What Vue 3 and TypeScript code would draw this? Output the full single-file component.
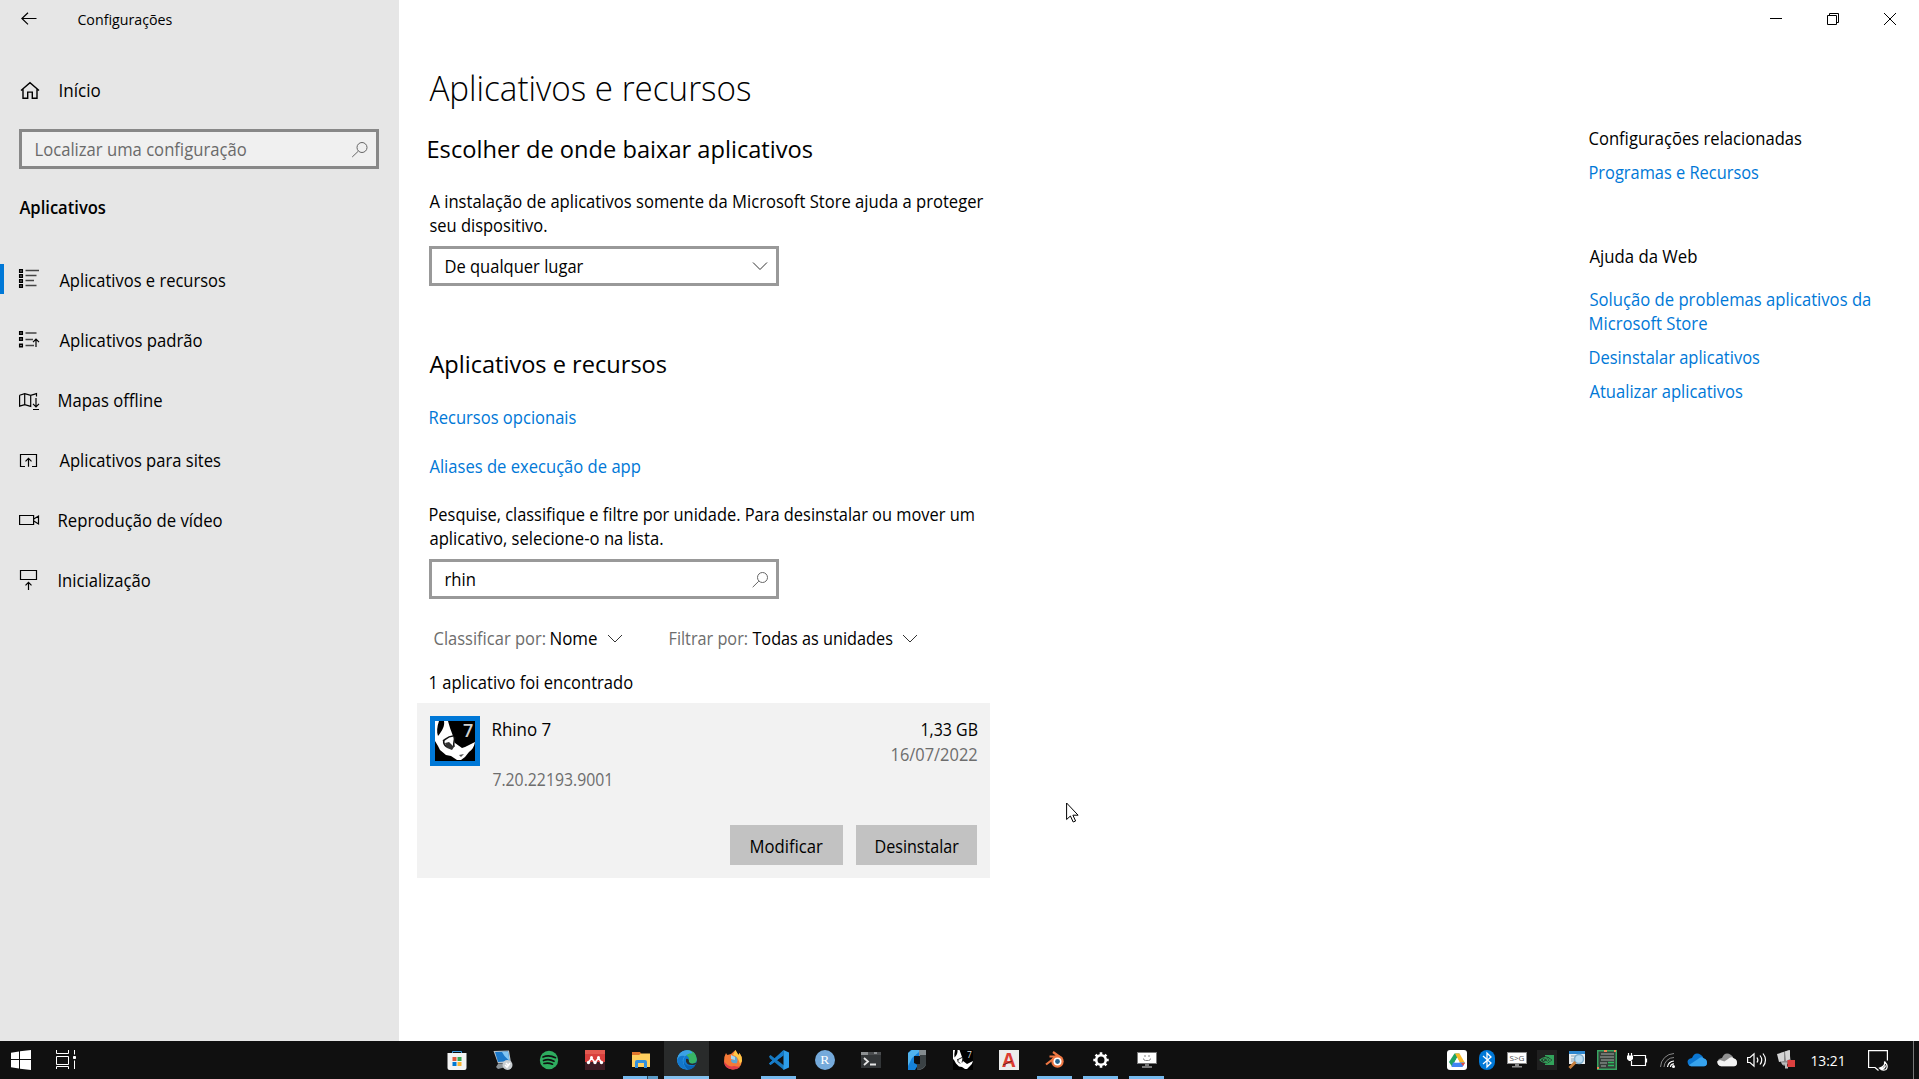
<script setup lang="ts">
interface NavItem { label: string; width: number; icon: string; inset: number }
interface Link { lines: { text: string; width: number }[] }

const nav: NavItem[] = [
  { label: 'Aplicativos e recursos', width: 166, icon: 'list', inset: 0 },
  { label: 'Aplicativos padrão', width: 142.5, icon: 'defaults', inset: 0 },
  { label: 'Mapas offline', width: 104, icon: 'map', inset: -0.5 },
  { label: 'Aplicativos para sites', width: 161, icon: 'sites', inset: 0 },
  { label: 'Reprodução de vídeo', width: 163.5, icon: 'video', inset: -0.8 },
  { label: 'Inicialização', width: 91.5, icon: 'startup', inset: -0.8 },
]

const helpLinks: Link[] = [
  { lines: [{ text: 'Solução de problemas aplicativos da', width: 281 }, { text: 'Microsoft Store', width: 118 }] },
  { lines: [{ text: 'Desinstalar aplicativos', width: 170 }] },
  { lines: [{ text: 'Atualizar aplicativos', width: 153 }] },
]

// Fits a line of text so that its ink spans exactly the given width.
const canvas = document.createElement('canvas').getContext('2d')!
const vFit = {
  mounted(el: HTMLElement, { value }: { value: number }) {
    const cs = getComputedStyle(el)
    canvas.font = `${cs.fontWeight} ${cs.fontSize} ${cs.fontFamily}`
    const m = canvas.measureText((el.textContent || '').trim())
    const scale = value / (m.actualBoundingBoxLeft + m.actualBoundingBoxRight)
    el.style.width = `${value}px`
    el.style.transform = `translateX(${m.actualBoundingBoxLeft * scale + 0.4}px) scaleX(${scale})`
  },
}
</script>

<template>
  <div class="screen">
    <div class="window">
      <aside class="sidebar">
        <header class="titlebar">
          <svg class="back" width="16" height="14" viewBox="0 0 16 14"><path d="M7 .8 .9 6.5 7 12.400M1 6.500H15.500" /></svg>
          <span class="t title" v-fit="95">Configurações</span>
        </header>
        <div class="home">
          <svg width="20" height="24" viewBox="0 0 20 24"><path d="M1 12.500 10 4.600l9 7.900M3 11v9.300h4.700v-6.200h4.600v6.200H17V11" /></svg>
          <span class="t" v-fit="40.5">Início</span>
        </div>
        <div class="search">
          <span class="t" v-fit="210.500">Localizar uma configuração</span>
          <svg width="18" height="18" viewBox="0 0 18 18"><circle cx="11" cy="6.500" r="5" /><path d="M7.300 10.200 1.200 16" /></svg>
        </div>
        <h3 class="t" v-fit="86">Aplicativos</h3>
        <nav>
          <div v-for="(item, i) in nav" :key="item.label" class="nav-item" :class="{ active: i === 0 }">
            <svg width="22" height="24" viewBox="0 0 22 24">
              <template v-if="item.icon === 'list'">
                <path class="thick" d="M.7 1.700h2.600v2.600H.7zM.7 6.700h2.600v2.600H.7zM.7 11.700h2.600v2.600H.7zM.7 16.700h2.600v2.600H.7z" />
                <path class="soft" d="M6.500 2.500H20M6.500 7.500h11M6.500 12.500H15M6.500 17.500h11" />
              </template>
              <template v-else-if="item.icon === 'defaults'">
                <path class="thick" d="M.7 3.700h2.600v2.600H.7zM.7 9.700h2.600v2.600H.7zM.7 16.200h2.600v2.600H.7z" />
                <path class="soft" d="M6.500 5h11M6.500 11.500h7.500M6.500 17.500H15" />
                <path d="M17 19v-7.500M14 14.200l3-3 3 3" />
              </template>
              <path v-else-if="item.icon === 'map'" d="M.6 7.200 5.700 5.600l6 1.800 5.800-1.800v3M.6 7.200v11l5.100-1.500 6 1.700V7.400M5.700 5.600v11.100M17 10v8.500M14 15.800l3 3 3-3M14 21.500h6" />
              <path v-else-if="item.icon === 'sites'" d="M6 18.500H1.500v-12h16v12H13M9.500 18.800v-8M6.500 13.300l3-3 3 3" />
              <path v-else-if="item.icon === 'video'" d="M.6 7.500h14v9H.6zM14.800 11l4.700-3v8l-4.700-3" />
              <path v-else d="M1.500 2.500h16v9h-16zM9.500 22v-7.500M6.500 17.300l3-3 3 3" />
            </svg>
            <span class="t" :style="{ marginLeft: item.inset + 'px' }" v-fit="item.width">{{ item.label }}</span>
          </div>
        </nav>
      </aside>

      <main>
        <section class="content">
          <h1 class="t" v-fit="321">Aplicativos e recursos</h1>
          <h2 class="t first" v-fit="384">Escolher de onde baixar aplicativos</h2>
          <p class="intro">
            <span class="t" v-fit="554.5">A instalação de aplicativos somente da Microsoft Store ajuda a proteger</span>
            <span class="t" v-fit="117.5">seu dispositivo.</span>
          </p>
          <div class="field">
            <span class="t" v-fit="138.500">De qualquer lugar</span>
            <svg width="18" height="18" viewBox="0 0 18 18"><path d="M2 5.500 9 12.500l7-7" /></svg>
          </div>
          <h2 class="t second" v-fit="237">Aplicativos e recursos</h2>
          <a class="t" v-fit="146.500">Recursos opcionais</a>
          <a class="t" v-fit="211.500">Aliases de execução de app</a>
          <p class="hint">
            <span class="t" v-fit="545">Pesquise, classifique e filtre por unidade. Para desinstalar ou mover um</span>
            <span class="t" v-fit="233.500">aplicativo, selecione-o na lista.</span>
          </p>
          <div class="field query">
            <span class="t rhin" v-fit="29.500">rhin</span>
            <svg width="18" height="18" viewBox="0 0 18 18"><circle cx="11.500" cy="6.500" r="5" /><path d="M7.800 10.200 1.700 16.200" /></svg>
          </div>
          <div class="filters">
            <span class="t muted" v-fit="111">Classificar por:</span>
            <span class="t value" v-fit="47">Nome</span>
            <svg width="16" height="10" viewBox="0 0 16 10"><path d="M1 1l7 7 7-7" /></svg>
            <span class="t muted drive" v-fit="78">Filtrar por:</span>
            <span class="t value" v-fit="140">Todas as unidades</span>
            <svg width="16" height="10" viewBox="0 0 16 10"><path d="M1 1l7 7 7-7" /></svg>
          </div>
          <div class="t found" v-fit="203">1 aplicativo foi encontrado</div>
          <article class="card">
            <div class="card-info">
              <svg class="app-icon" width="50" height="50" viewBox="0 0 50 50">
                <path fill="#0078d7" d="M0 0h50v50H0z" /><path fill="#000" d="M5 5h40v40H5z" />
                <path fill="#fff" d="M5 5h4C7 11 6.500 16 8 20c4-5 7-10 6-15h4c1 4 3 10 5 15l2 7 7 5 3-1 10-5c-1 5-3 8-6 10l-4 5-4 3h-4l-6-4-5-1-6-5-2-4-3-5z" />
                <path fill="none" stroke="#111" stroke-width="1.600" d="M13 25c3-2 5-5 10-5M14 24c-1 3 0 5 3 7M25 21c-1 5-2 7-1 10" />
                <path fill="#333" d="m15 27 4-1 5 5-2 3-5-2z" /><path fill="#555" d="m29 39 5-1-3 3z" />
                <text x="33" y="20.500" font-size="18" font-weight="600" fill="#d0d0d0">7</text>
              </svg>
              <div class="names">
                <span class="t" v-fit="58.500">Rhino 7</span>
                <span class="t muted" v-fit="118">7.20.22193.9001</span>
              </div>
              <div class="facts">
                <span class="t" v-fit="56">1,33 GB</span>
                <span class="t muted" v-fit="86">16/07/2022</span>
              </div>
            </div>
            <div class="actions">
              <button class="modify"><span class="t" v-fit="73">Modificar</span></button>
              <button class="remove"><span class="t" v-fit="84">Desinstalar</span></button>
            </div>
          </article>
        </section>

        <section class="side">
          <svg class="controls" width="130" height="14" viewBox="0 0 130 14">
            <path d="M0 6.500h12M57.500 3.500h9v9h-9zM59.500 3.500v-2h9v9h-2M114 1l12 12M126 1l-12 12" />
          </svg>
          <div class="t related" v-fit="212">Configurações relacionadas</div>
          <a class="t programs" v-fit="169">Programas e Recursos</a>
          <div class="t web" v-fit="108">Ajuda da Web</div>
          <div class="help">
            <a v-for="link in helpLinks" :key="link.lines[0].text">
              <span v-for="line in link.lines" :key="line.text" class="t" v-fit="line.width">{{ line.text }}</span>
            </a>
          </div>
        </section>
      </main>
    </div>

    <footer class="taskbar">
      <svg class="start" width="70" height="38" viewBox="0 0 70 38">
        <path fill="#fff" d="M0 11.700 8 10.500V18H0zM9 10.300 20 9v9H9zM0 19h8v8.500l-8-1.200zM9 19h11v10L9 27.700z" />
        <g fill="none" stroke="#fff"><path d="M45.500 9v3.500h12V9M45.500 15.500h12v8h-12zM45.500 28v-2.500h12V28M63.500 9v4.500M63.500 19.500V28" /><path fill="#fff" d="M62.500 15.500h2v2h-2z" /></g>
      </svg>

      <div class="apps">
        <div class="app"><svg viewBox="0 0 20 20"><path d="M5.500 4V1.500h9V4" fill="none" stroke="#3a9be0" /><path fill="#f4f4f4" d="M.5 3h19v15q0 2-2 2h-15q-2 0-2-2z" /><path fill="#e05a3c" d="M5.500 7H9.500v4h-4z" /><path fill="#36a852" d="M10.500 7h4v4h-4z" /><path fill="#0078d4" d="M5.500 12h4v4h-4z" /><path fill="#fab432" d="M10.500 12h4v4h-4z" /></svg></div>
        <div class="app"><svg viewBox="0 0 20 20"><path fill="#b9c3ca" d="M.5 1 16 .5l2 12-13 1z" /><path fill="#1b78c9" d="m2 2 13-.5 1.500 9.500L5 12z" /><path fill="#80c5f3" d="m9 2 6-.3L16.500 11l-5-5z" /><path fill="#8b9297" d="m5 14 7-1 1 4-8 2-2-2z" /><circle cx="14.500" cy="15" r="5" fill="#c9ced1" /><path d="m12 15 2 2 3-4M13 13l3 3" stroke="#fff" stroke-width="1.500" fill="none" /></svg></div>
        <div class="app"><svg viewBox="0 0 20 20"><circle cx="10" cy="10" r="9.200" fill="#2ead5f" /><path d="M4 7q6-2.500 12.500.7M4.500 10.500q5.500-2 10.500.8M5 13.500q4.500-1.200 8.500.7" fill="none" stroke="#101010" stroke-width="1.700" stroke-linecap="round" /></svg></div>
        <div class="app"><svg viewBox="0 0 20 20"><path fill="#d8403d" d="M0 0h20v12H0z" /><path fill="#3d1c23" d="M0 12h20v8H0z" /><path fill="#e45a50" d="M0 0h20v4H0z" /><path d="M3.500 12.500 6.500 8l3.500 4.500L13.500 8l3 4.500" fill="none" stroke="#fff" stroke-width="1.500" /><circle cx="3.500" cy="12.500" r="1.700" fill="#fff" /><circle cx="10" cy="12.500" r="1.700" fill="#fff" /><circle cx="16.500" cy="12.500" r="1.700" fill="#fff" /><circle cx="6.500" cy="7.500" r="1.500" fill="#fff" /><circle cx="13.500" cy="7.500" r="1.500" fill="#fff" /></svg></div>
        <div class="app open grouped"><svg viewBox="0 0 20 20"><path fill="#e2762c" d="M1 2h8l2 3v4H1z" /><path fill="#ffcf5e" d="M1 5h7l2-1.500h9V17H1z" /><path fill="#3290dc" d="M4 18v-6q0-2 2-2h8q2 0 2 2v6h-3v-5H7v5z" /></svg></div>
        <div class="app open current"><svg viewBox="0 0 20 20"><circle cx="10" cy="10" r="9.800" fill="#0f78d0" /><path fill="#3aa5e8" d="M.3 9A9.800 9.800 0 0 1 18 4.500C13 0 6 3 4 8z" /><path fill="#38b565" d="M10 .3q9 0 9.900 9-.5 4.400-5 4.500-4 0-3-3Q13 5 6 5z" /><path fill="#3ba2e4" d="M.4 8Q3 .3 10 .2q4.500 0 5.600 3Q9 3 6.500 9 6 15 11 19.600 1 19-.1 10z" /><path fill="#1377cc" d="M0 10Q2 4.500 8 6q-3 3-2 6 1 5 5 7.700Q1 19 0 10z" /><path fill="#0a62b4" d="M6.500 9q0 7 7 7 3 0 5-1.500Q16 19.500 11 19.700 6 16 6.500 9z" /><path fill="#292b2b" d="M9 9q3-1 3 3 2 3 7.500.5L18.500 14.500q-8 2-9.500-3z" /></svg></div>
        <div class="app"><svg viewBox="0 0 20 20"><path fill="#f57937" d="M3 3l1.500 2.500Q6 4 8 4L12.500 0q1 3.500 3 5l1-2q3 4 2.500 8-1 8-9 8.500Q2 19 1 12 .5 7 3 3z" /><path fill="#ffc846" d="m12.500 0 3 5 1-2q3 4 2.500 8l-2 3Q15 6 10 5z" /><path fill="#df3e4a" d="M1 11q4 7 10 5l6 1q-3 3-8 2.500Q1 18.500 1 11z" /><circle cx="10" cy="10.500" r="4.500" fill="#5ba6d4" /><path fill="#f57937" d="M2 6q4-3 7 1l3 1q-1 2-4 2 0 4 6 3-4 5-9 1z" /><path fill="#a9d8ee" d="m8 5 4 2v3l-4-1z" /></svg></div>
        <div class="app open"><svg viewBox="0 0 20 20"><path fill="#1778bd" d="M0 6.500 1.500 5 15 15.500V20L1 8.500zM14.500 0v5L1.500 15 0 13.500z" /><path fill="#2d9de9" d="m14.500 0 5.500 2.500v15L14.500 20z" /><path fill="#167dcc" d="m0 13.500 14.500-13v5L1.500 15z" /></svg></div>
        <div class="app"><svg viewBox="0 0 20 20"><circle cx="10" cy="10" r="10" fill="#75aadb" /><text x="5.300" y="14.200" class="serif" font-size="13.500" fill="#fff">R</text></svg></div>
        <div class="app"><svg viewBox="0 0 20 20"><path fill="#4b4d4f" d="M0 2h20v16H0z" /><path fill="#333638" d="M0 5h20v13H0z" /><path fill="#8d9092" d="M0 2h7v3H0zM13 2h3v2h-3z" /><path d="m3 8 4 3.500-4 3.500M9 14.500h6" fill="none" stroke="#e5e5e5" stroke-width="1.800" /></svg></div>
        <div class="app"><svg viewBox="0 0 20 20"><path fill="#1582da" d="M4 0h8v6H7v7l4 2-3 5H1V3z" /><path fill="#52b4ed" d="m1 3 4-3h7v2L5 8l-4 8z" /><path fill="#848c90" d="M12 0h7v12q0 8-9 8v-6h3V6h-1z" /><path fill="#3a4144" d="M13 5h6v9q-1 5-9 6v-6h3z" /></svg></div>
        <div class="app"><svg viewBox="0 0 20 20"><path fill="#000" d="M0 0h20v20H0z" /><path fill="#fff" d="M0 0h2Q1 4 1.500 7.500 5 4 4.500 0h2L9 7l1 4 4 3 6-3q-1 4-3 5l-3 3h-2l-3-2-3-.5-3-3L1 10l-1-1z" /><path fill="none" stroke="#222" d="m4 10 5-2.500M5 9.500q-1 2 2 4M10 8.500l-1 4" /><text x="14" y="8" font-size="8.500" fill="#ddd">7</text></svg></div>
        <div class="app"><svg viewBox="0 0 20 20"><path fill="#ececec" d="M0 0h20v20H0z" /><text x="3.300" y="16.700" font-size="19" font-weight="700" fill="#dc3c32">A</text><path d="m4 15 9-4" stroke="#68201f" /></svg></div>
        <div class="app open"><svg viewBox="0 0 20 20"><path d="M1 14.500 11.500 6.500H4.500M8 2l9 6.500" fill="none" stroke="#ef7743" stroke-width="2.200" /><circle cx="12.500" cy="11.500" r="6.200" fill="#ef7743" /><circle cx="12.500" cy="11.500" r="4" fill="#fff" /><circle cx="12.500" cy="11.500" r="2.400" fill="#28638c" /></svg></div>
        <div class="app open"><svg viewBox="0 0 20 20"><circle cx="10" cy="10" r="4.800" fill="none" stroke="#fff" stroke-width="2.600" /><path d="M10 2.300v3M10 14.700v3M2.300 10h3M14.700 10h3M4.600 4.600l2 2M13.400 13.400l2 2M15.400 4.600l-2 2M6.600 13.400l-2 2" stroke="#fff" stroke-width="2.600" /></svg></div>
        <div class="app open"><svg viewBox="0 0 20 20"><path fill="#777" d="M0 2h20v12H0zM8 14h4v2h3v2H5v-2h3z" /><path fill="#fff" d="M1 3h18v10H1z" /><path fill="none" stroke="#888" d="M8 5v2M12 5v2M6.500 8.500q0 2 2 2h3q2 0 2-2" /></svg></div>
      </div>

      <div class="tray">
        <svg viewBox="0 0 20 20"><rect width="20" height="20" rx="3" fill="#fff" /><path fill="#1fa463" d="M7.500 3.500h5L5 16.500 2 12z" /><path fill="#f9b928" d="M8 3.500h4.500L18 13h-5z" /><path fill="#4285f4" d="M6 12.500h12L15.500 17h-11z" /><path fill="#fff" d="m10 8 2.500 4.500h-5z" /><path fill="#e5483b" d="M14 13h4l-2 3z" /></svg>
        <svg viewBox="0 0 20 20"><rect x="2" width="16" height="20" rx="8" fill="#0078d7" /><path d="m6 6 8 7-4 4V3l4 4-8 7" fill="none" stroke="#fff" stroke-width="1.300" /></svg>
        <svg viewBox="0 0 20 20"><path fill="#8b8b8b" d="M0 2h20v12H0zM8 14h4v2h3v1.500H5V16h3z" /><path fill="#fff" d="M1 3h18v10H1z" /><text x="2.500" y="11" font-size="8" textLength="15" lengthAdjust="spacingAndGlyphs" fill="#555">S&gt;G</text></svg>
        <svg viewBox="0 0 20 20"><path fill="#202020" d="M0 0h20v20H0z" /><path fill="#32a35b" d="M8 5h9v10H8z" /><path d="M3 10q5-5 10.500 0-5.500 5.500-10.500 0zM6 10q2.500-2.500 5 0-2.500 3-5 0z" fill="none" stroke="#202020" stroke-width="2.200" /><path d="M3 10q5-5 10.500 0-5.500 5.500-10.500 0zM6 10q2.500-2.500 5 0-2.500 3-5 0z" fill="none" stroke="#35a35c" stroke-width="1.100" /></svg>
        <svg viewBox="0 0 20 20"><path fill="#e8ecef" d="M2 1h16v13H2z" /><path fill="#2c86cf" d="M2 1h16v3H2z" /><path d="M4 6h9M4 9h5M4 11h4" stroke="#8ba5b5" /><circle cx="12" cy="9" r="4.500" fill="#b9dcf2" stroke="#7eaecd" stroke-width="1.500" /><path d="m8.500 12-6 6" stroke="#c67f3e" stroke-width="3" /></svg>
        <svg viewBox="0 0 20 20"><path fill="#353e39" stroke="#38a461" stroke-width="1.500" d="M.75.75h18.500v18.500H.75z" /><path d="M4 4h13M3 7h14M4 10h13M3 13h7M4 16h5" stroke="#a4aaa5" stroke-width="1.200" /><path d="M11 12.500h6M11 15.500h6" stroke="#2dbb60" stroke-width="1.600" /><path d="M7 1h3M17 1h2M0 18h2" stroke="#ee8555" stroke-width="2" /></svg>
        <svg viewBox="0 0 20 20"><path fill="none" stroke="#fff" stroke-width="1.200" d="M6.500 5.500h12v10h-14V11M19.500 8.500v4M1.500 3v3M4.500 3v3" /><path fill="#fff" d="M0 5.500h6V9L4 11H2L0 9z" /></svg>
        <svg viewBox="0 0 20 20"><g fill="none"><path d="M3.500 17A14 14 0 0 1 17 3.500M7 17A10 10 0 0 1 17 7.500" stroke="#888" /><path d="M10.500 17a6.500 6.500 0 0 1 6.500-6M13.500 17q0-3 3.500-3.200" stroke="#fff" stroke-width="1.200" /></g><circle cx="16.500" cy="16.500" r="1.500" fill="#fff" /></svg>
        <svg viewBox="0 0 20 20"><path fill="#0b76d1" d="M1 14q-2-5 4-6Q8 1 14 5q2 1 2.500 3.500Q20 9 20 13q0 3-3 3.300H4Q2 16.300 1 14z" /><path fill="#37a3ed" d="m2 15 9-6q3-3 6-.5 3 .5 3 4.500 0 3-3 3.300H4z" /></svg>
        <svg viewBox="0 0 20 20"><path fill="#919191" d="M1 14q-2-5 4-6Q8 1 14 5q2 1 2.500 3.500Q20 9 20 13q0 3-3 3.300H4Q2 16.300 1 14z" /><path fill="#f2f2f2" d="m2 15 9-6q3-3 6-.5 3 .5 3 4.500 0 3-3 3.300H4q-4-1-3.700-5L3 10l6 2z" /></svg>
        <svg viewBox="0 0 20 20"><path fill="none" stroke="#fff" stroke-width="1.200" d="M.6 7.500H3L7 3.800v12.400L3 12.500H.6zM10 7.500q1.700 2.500 0 5M13 5.500q3.500 4.500 0 9M16 3.500q5 6.500 0 13" /></svg>
        <svg viewBox="0 0 20 20"><path fill="#888" d="m3 3 9-3 2 12-7 4-3-3z" /><path fill="#d5d5d5" d="m0 4 7-2v9l-5 1zM8 1.500 13 0v9l-4 2z" /><path d="M5 13.500h4v4h2" stroke="#bbb" stroke-width="2" fill="none" /><path fill="#dc403f" d="M10.500 10H18v7h-7.500z" /></svg>
      </div>
      <span class="t clock" v-fit="32">13:21</span>
      <svg class="notify" width="22" height="22" viewBox="0 0 22 22"><path d="M7.500 17.500H.6V.6h18.800v10M7 17.500l3.500 3" fill="none" stroke="#fff" stroke-width="1.200" /><path d="M16.500 11.500q1 5-5 6.500 3 3.500 6.500 1.500 3-3-1.500-8M12.500 18.500q4 1 5-3" fill="none" stroke="#fff" stroke-width="1.200" /></svg>
      <i class="peek"></i>
    </footer>

    <svg class="cursor" width="14" height="22" viewBox="0 0 14 22"><path d="M.6 1v16.500l3.800-3.500 2.800 6 2.400-1-2.700-5.800h5.200z" fill="#fff" stroke="#000" stroke-width="1" /></svg>
  </div>
</template>

<style>
html, body { margin: 0; overflow: hidden; }
</style>

<style scoped>
.screen { position: relative; display: flex; flex-direction: column; width: 1919px; height: 1079px; overflow: hidden; background: #fff; color: #000; font: 18px/24px "Open Sans", "Noto Sans", sans-serif; }
.t { display: block; flex: none; white-space: nowrap; transform-origin: 0 0; }
svg { display: block; flex: none; overflow: visible; }
h1, h2, h3, p { margin: 0; font-weight: 400; }
a { color: #0078d7; }
.muted { color: #6d6d6d; }
.window { display: flex; height: 1041px; }

.sidebar { width: 399px; background: #e6e6e6; flex: none; }
.sidebar svg { fill: none; stroke: #000; stroke-width: 1.2; }
.titlebar { display: flex; height: 78px; padding-left: 21px; box-sizing: border-box; }
.back { margin-top: 12px; }
.title { margin: 10px 0 0 40px; font-size: 14.5px; line-height: 20px; }
.home { display: flex; padding-left: 20px; gap: 18.6px; height: 24px; }
.home svg { stroke-width: 1.4; }
.search { box-sizing: border-box; display: flex; align-items: center; justify-content: space-between; width: 360px; height: 40px; margin: 27px 0 0 19px; padding: 0 7px 0 13px; border: 3px solid #888; background: #f0f0f0; color: #6a6a6a; }
.sidebar .search svg { stroke: #666; stroke-width: 1; margin-top: 1px; }
h3 { margin: 26px 0 31px 18.6px; font-weight: 600; font-size: 17.5px; }
.nav-item { display: flex; align-items: center; gap: 17.8px; height: 60px; padding-left: 19px; }
.active { background: linear-gradient(#0078d7, #0078d7) 0 14px / 4px 30px no-repeat; }
.sidebar .thick { stroke-width: 1.5; }
.sidebar .soft { stroke: #444; stroke-width: 1.3; }

main { display: flex; justify-content: space-between; flex: 1; }
.content { width: 590px; padding: 66px 0 0 30px; }
h1 { font-size: 34.5px; line-height: 44px; font-weight: 300; }
h2 { font-size: 24.5px; line-height: 32px; }
.first { margin: 23px 0 0 -1px; }
.intro { margin: 24px 0 9px; }
.second { margin: 62px 0 25px; }
.hint { margin: 24px 0 9px; }
.content a + a { margin-top: 25px; }
.field { box-sizing: border-box; display: flex; align-items: center; justify-content: space-between; width: 350px; height: 40px; padding: 0 7px 0 12.5px; border: 3px solid #999; }
.field svg, .filters svg { fill: none; stroke: #333; stroke-width: 1; }
.field.query svg { stroke: #666; margin-top: 1px; }
.rhin { margin: -1px 0 0 .6px; }
.filters { display: flex; align-items: center; height: 24px; margin: 27px 0 20px 5px; }
.filters svg { margin-top: 1px; }
.value { margin: 0 10px 0 5px; }
.drive { margin-left: 45.500px; }
.card { box-sizing: border-box; width: 573px; height: 175px; margin: 9px 0 0 -12px; padding: 13px; background: #f2f2f2; }
.card-info { display: flex; height: 109px; }
.names { display: flex; flex-direction: column; gap: 26px; margin: 1px auto 0 12px; }
.facts { display: flex; flex-direction: column; align-items: flex-end; gap: 1px; margin-top: 1px; }
.actions { display: flex; justify-content: flex-end; gap: 13px; }
button { display: flex; justify-content: center; align-items: center; box-sizing: border-box; height: 40px; padding: 2px 0 0; border: 0; background: #c2c2c2; color: #000; font: inherit; }
.modify { width: 113px; }
.remove { width: 121px; }

.side { width: 330px; }
.controls { margin: 12px 0 100px 181px; fill: none; stroke: #000; stroke-width: 1; }
.programs { margin-top: 10px; }
.web { margin: 60px 0 19px; }
.help { display: flex; flex-direction: column; gap: 10px; }

.taskbar { display: flex; height: 38px; background: #101010; color: #fff; }
.start { margin-left: 11px; }
.apps { display: flex; width: 736px; margin-left: 353px; }
.app { box-sizing: border-box; width: 46px; padding: 9px 13px 0; height: 38px; }
.app svg { width: 20px; height: 20px; }
.open { background: linear-gradient(#76b9ed, #76b9ed) 5px 35px / 35px 3px no-repeat; }
.grouped { background: linear-gradient(90deg, #76b9ed 24px, #27475c 24px 25px, #5b9ac6 25px) 5px 35px / 35px 3px no-repeat; }
.current { background: linear-gradient(#83c0ee, #83c0ee) 0 35px / 45px 3px no-repeat, linear-gradient(#292b2b, #292b2b) 0 0 / 45px 38px no-repeat; }
.tray { display: flex; gap: 10px; margin: 9px 0 0 277px; }
.tray svg { width: 20px; height: 20px; }
.serif { font-family: "Liberation Serif", serif; }
.clock { margin: 10px 0 0 14px; font-size: 14.5px; line-height: 20px; }
.notify { margin: 9px 0 0 25px; }
.peek { width: 1px; margin-left: 23px; background: #777; }
.cursor { position: absolute; left: 1066px; top: 802px; }
</style>
